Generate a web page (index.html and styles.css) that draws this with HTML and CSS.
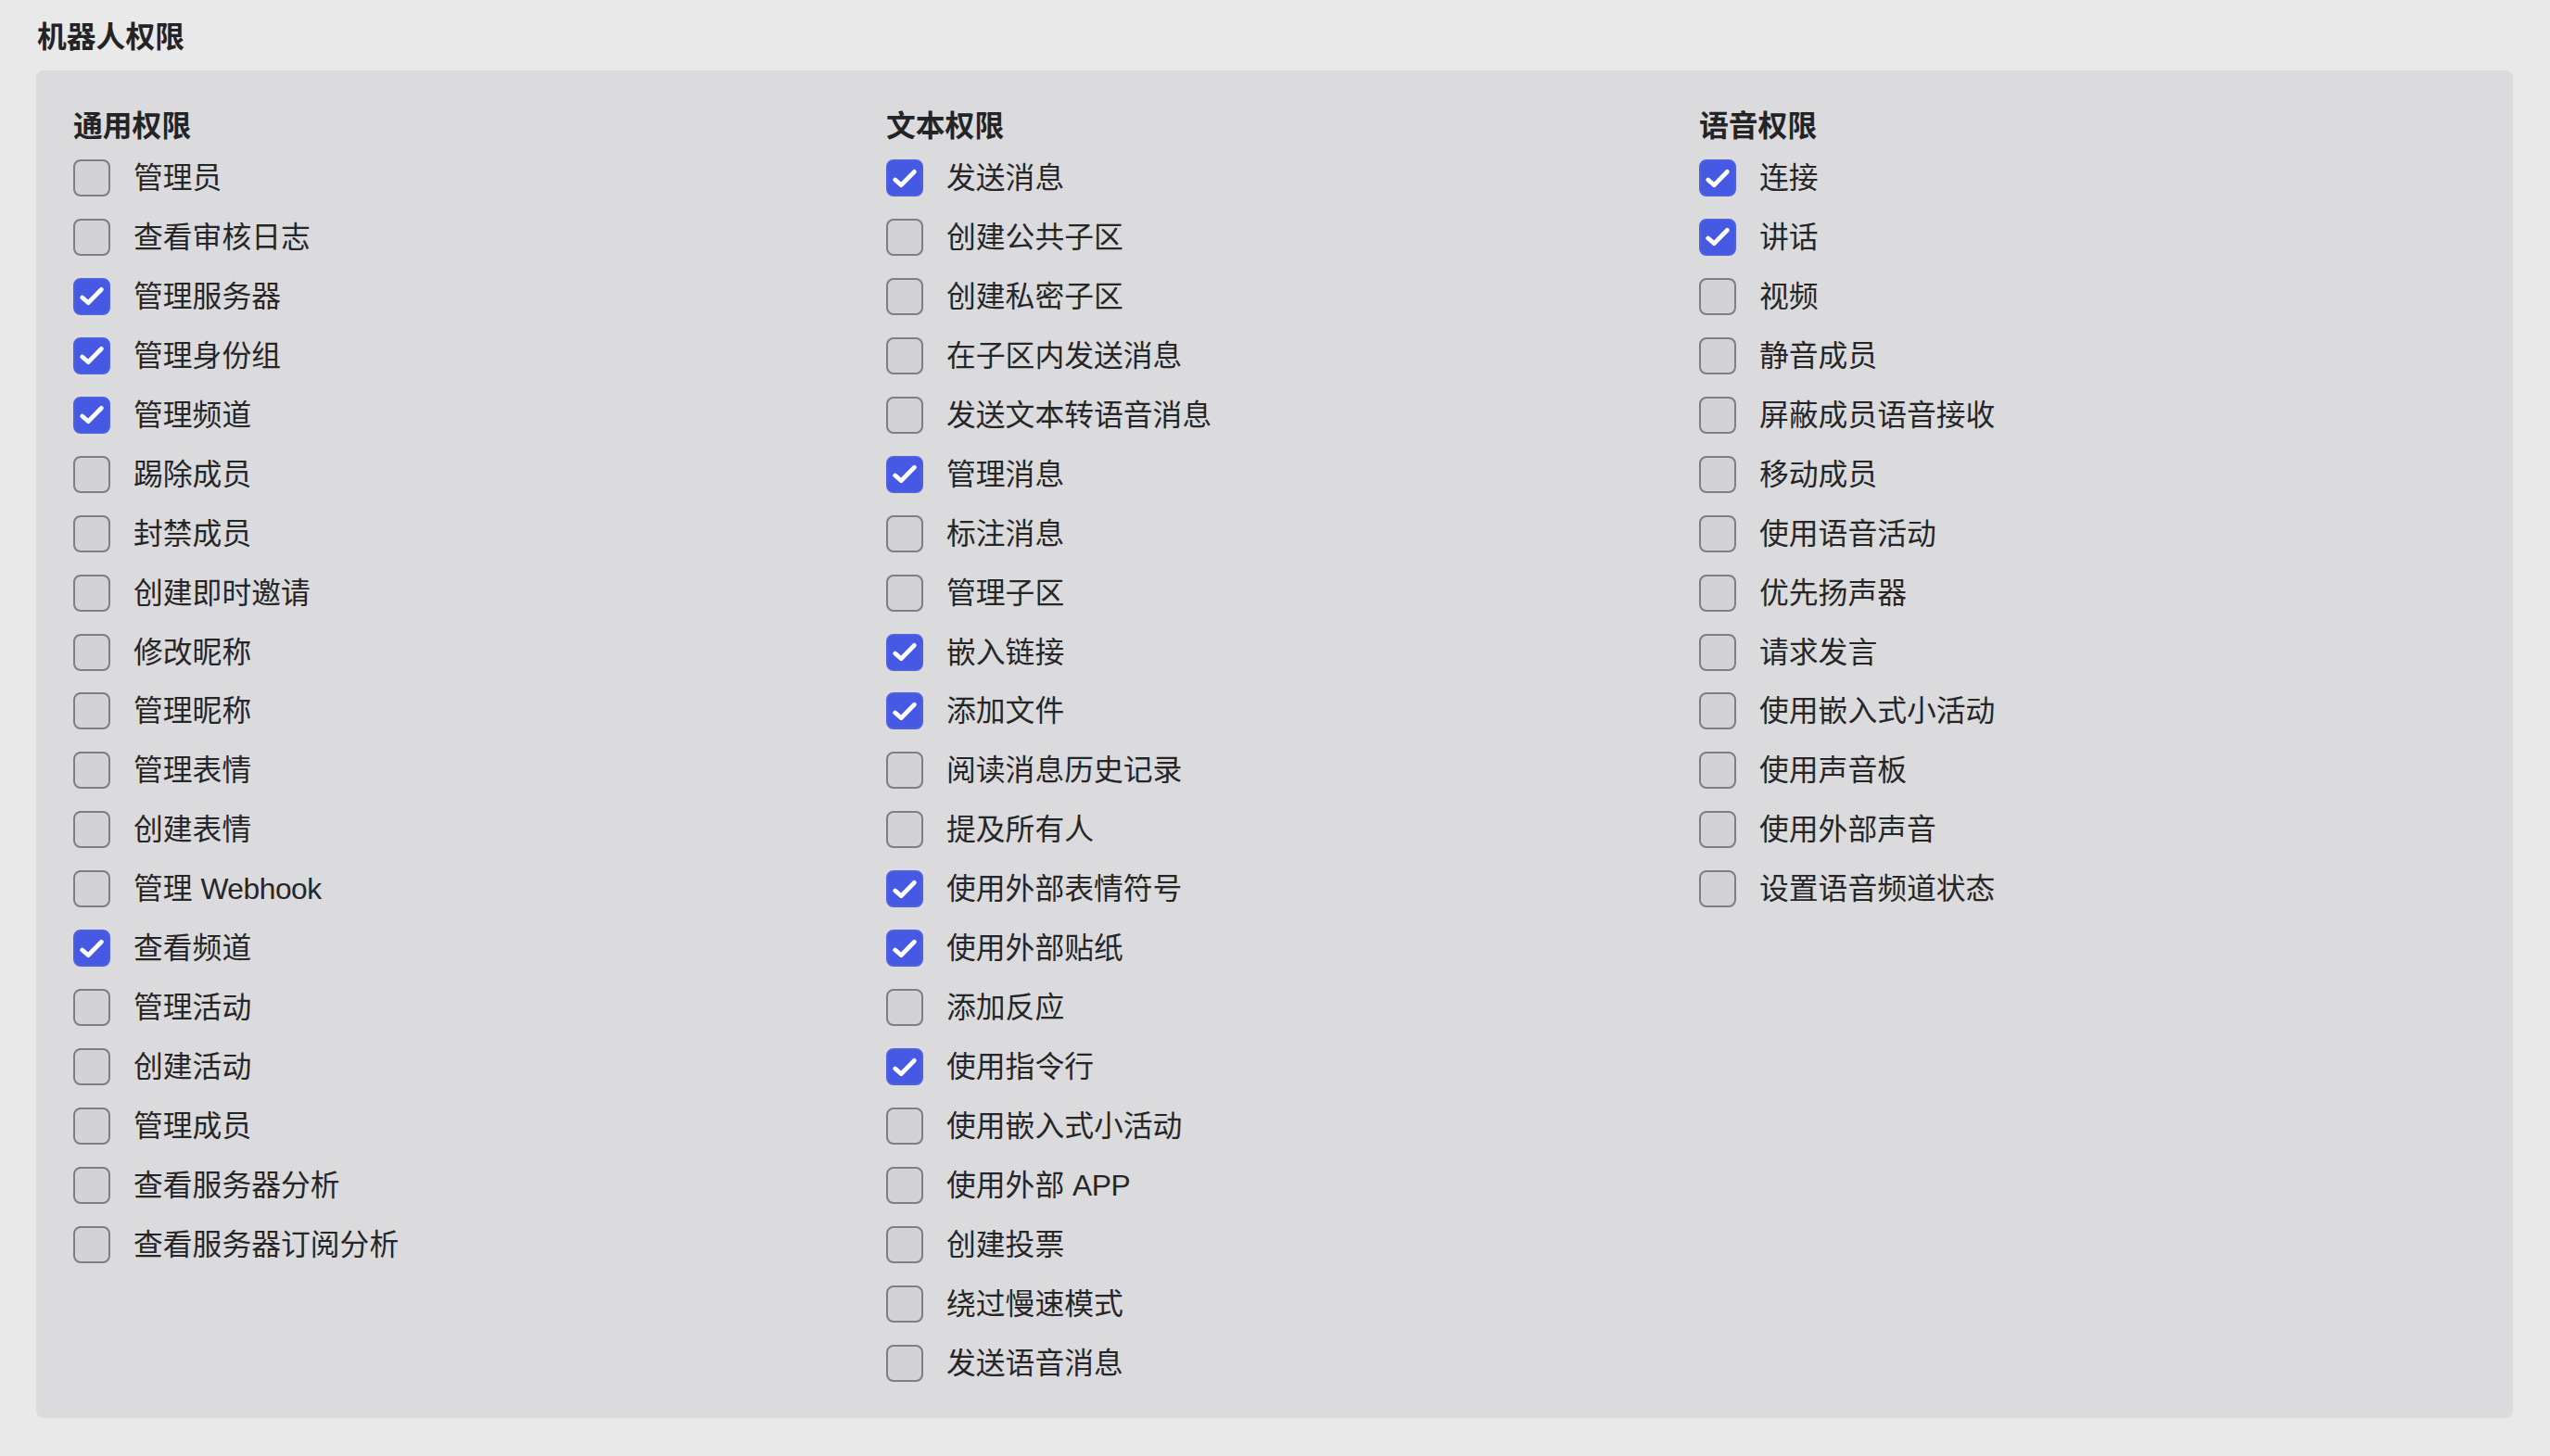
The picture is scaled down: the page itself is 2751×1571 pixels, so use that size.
FILE: index.html
```html
<!DOCTYPE html>
<html lang="zh-CN">
<head>
<meta charset="utf-8">
<title>机器人权限</title>
<link rel="stylesheet" href="styles.css">
</head>
<body>
<h1 class="title">机器人权限</h1>
<div class="panel">
  <section class="col">
    <h2 class="col-head">通用权限</h2>
    <ul class="list">
      <li class="item"><span class="box"></span><span class="label">管理员</span></li>
      <li class="item"><span class="box"></span><span class="label">查看审核日志</span></li>
      <li class="item on"><span class="box"><svg viewBox="0 0 40 40"><path d="M9.7 22 L16.3 27.7 L30.3 13.3"/></svg></span><span class="label">管理服务器</span></li>
      <li class="item on"><span class="box"><svg viewBox="0 0 40 40"><path d="M9.7 22 L16.3 27.7 L30.3 13.3"/></svg></span><span class="label">管理身份组</span></li>
      <li class="item on"><span class="box"><svg viewBox="0 0 40 40"><path d="M9.7 22 L16.3 27.7 L30.3 13.3"/></svg></span><span class="label">管理频道</span></li>
      <li class="item"><span class="box"></span><span class="label">踢除成员</span></li>
      <li class="item"><span class="box"></span><span class="label">封禁成员</span></li>
      <li class="item"><span class="box"></span><span class="label">创建即时邀请</span></li>
      <li class="item"><span class="box"></span><span class="label">修改昵称</span></li>
      <li class="item"><span class="box"></span><span class="label">管理昵称</span></li>
      <li class="item"><span class="box"></span><span class="label">管理表情</span></li>
      <li class="item"><span class="box"></span><span class="label">创建表情</span></li>
      <li class="item"><span class="box"></span><span class="label">管理 <span class="latin">Webhook</span></span></li>
      <li class="item on"><span class="box"><svg viewBox="0 0 40 40"><path d="M9.7 22 L16.3 27.7 L30.3 13.3"/></svg></span><span class="label">查看频道</span></li>
      <li class="item"><span class="box"></span><span class="label">管理活动</span></li>
      <li class="item"><span class="box"></span><span class="label">创建活动</span></li>
      <li class="item"><span class="box"></span><span class="label">管理成员</span></li>
      <li class="item"><span class="box"></span><span class="label">查看服务器分析</span></li>
      <li class="item"><span class="box"></span><span class="label">查看服务器订阅分析</span></li>
    </ul>
  </section>
  <section class="col">
    <h2 class="col-head">文本权限</h2>
    <ul class="list">
      <li class="item on"><span class="box"><svg viewBox="0 0 40 40"><path d="M9.7 22 L16.3 27.7 L30.3 13.3"/></svg></span><span class="label">发送消息</span></li>
      <li class="item"><span class="box"></span><span class="label">创建公共子区</span></li>
      <li class="item"><span class="box"></span><span class="label">创建私密子区</span></li>
      <li class="item"><span class="box"></span><span class="label">在子区内发送消息</span></li>
      <li class="item"><span class="box"></span><span class="label">发送文本转语音消息</span></li>
      <li class="item on"><span class="box"><svg viewBox="0 0 40 40"><path d="M9.7 22 L16.3 27.7 L30.3 13.3"/></svg></span><span class="label">管理消息</span></li>
      <li class="item"><span class="box"></span><span class="label">标注消息</span></li>
      <li class="item"><span class="box"></span><span class="label">管理子区</span></li>
      <li class="item on"><span class="box"><svg viewBox="0 0 40 40"><path d="M9.7 22 L16.3 27.7 L30.3 13.3"/></svg></span><span class="label">嵌入链接</span></li>
      <li class="item on"><span class="box"><svg viewBox="0 0 40 40"><path d="M9.7 22 L16.3 27.7 L30.3 13.3"/></svg></span><span class="label">添加文件</span></li>
      <li class="item"><span class="box"></span><span class="label">阅读消息历史记录</span></li>
      <li class="item"><span class="box"></span><span class="label">提及所有人</span></li>
      <li class="item on"><span class="box"><svg viewBox="0 0 40 40"><path d="M9.7 22 L16.3 27.7 L30.3 13.3"/></svg></span><span class="label">使用外部表情符号</span></li>
      <li class="item on"><span class="box"><svg viewBox="0 0 40 40"><path d="M9.7 22 L16.3 27.7 L30.3 13.3"/></svg></span><span class="label">使用外部贴纸</span></li>
      <li class="item"><span class="box"></span><span class="label">添加反应</span></li>
      <li class="item on"><span class="box"><svg viewBox="0 0 40 40"><path d="M9.7 22 L16.3 27.7 L30.3 13.3"/></svg></span><span class="label">使用指令行</span></li>
      <li class="item"><span class="box"></span><span class="label">使用嵌入式小活动</span></li>
      <li class="item"><span class="box"></span><span class="label">使用外部 <span class="latin">APP</span></span></li>
      <li class="item"><span class="box"></span><span class="label">创建投票</span></li>
      <li class="item"><span class="box"></span><span class="label">绕过慢速模式</span></li>
      <li class="item"><span class="box"></span><span class="label">发送语音消息</span></li>
    </ul>
  </section>
  <section class="col">
    <h2 class="col-head">语音权限</h2>
    <ul class="list">
      <li class="item on"><span class="box"><svg viewBox="0 0 40 40"><path d="M9.7 22 L16.3 27.7 L30.3 13.3"/></svg></span><span class="label">连接</span></li>
      <li class="item on"><span class="box"><svg viewBox="0 0 40 40"><path d="M9.7 22 L16.3 27.7 L30.3 13.3"/></svg></span><span class="label">讲话</span></li>
      <li class="item"><span class="box"></span><span class="label">视频</span></li>
      <li class="item"><span class="box"></span><span class="label">静音成员</span></li>
      <li class="item"><span class="box"></span><span class="label">屏蔽成员语音接收</span></li>
      <li class="item"><span class="box"></span><span class="label">移动成员</span></li>
      <li class="item"><span class="box"></span><span class="label">使用语音活动</span></li>
      <li class="item"><span class="box"></span><span class="label">优先扬声器</span></li>
      <li class="item"><span class="box"></span><span class="label">请求发言</span></li>
      <li class="item"><span class="box"></span><span class="label">使用嵌入式小活动</span></li>
      <li class="item"><span class="box"></span><span class="label">使用声音板</span></li>
      <li class="item"><span class="box"></span><span class="label">使用外部声音</span></li>
      <li class="item"><span class="box"></span><span class="label">设置语音频道状态</span></li>
    </ul>
  </section>
</div>
</body>
</html>
```

FILE: styles.css
```css
* { box-sizing: border-box; }
html, body {
  margin: 0;
  padding: 0;
  background: #e9e9e9;
}
body {
  font-family: "Liberation Sans", "Noto Sans CJK SC", sans-serif;
  color: #262628;
  min-height: 1571px;
}
.title {
  margin: 18px 0 0 40px;
  font-size: 31.8px;
  line-height: 44px;
  font-weight: 700;
  color: #242426;
}
.panel {
  margin: 14px 40px 0 39px;
  background: #dbdbdd;
  border-radius: 8px;
  padding: 40px 40px 39px 40px;
  display: grid;
  grid-template-columns: repeat(3, 1fr);
  column-gap: 39px;
  align-items: start;
}
.col-head {
  margin: 0 0 16px 0;
  font-size: 31.8px;
  line-height: 40px;
  font-weight: 700;
  color: #242426;
}
.list {
  list-style: none;
  margin: 0;
  padding: 0;
  display: flex;
  flex-direction: column;
  gap: 23.95px;
}
.item {
  display: flex;
  align-items: center;
  gap: 25px;
  height: 40px;
}
.box {
  width: 40px;
  height: 40px;
  flex: none;
  border: 2.5px solid #7d7d83;
  border-radius: 8px;
  background: #d3d3d6;
  display: flex;
}
.box svg {
  width: 40px;
  height: 40px;
  margin: -2.5px;
}
.box path {
  fill: none;
  stroke: #ffffff;
  stroke-width: 4.8;
  stroke-linecap: round;
  stroke-linejoin: round;
}
.item.on .box {
  background: #4659e3;
  border-color: #4e60e0;
}
.label {
  font-size: 31.8px;
  line-height: 40px;
  font-weight: 400;
  white-space: nowrap;
}
.latin {
  letter-spacing: -0.5px;
}
```
